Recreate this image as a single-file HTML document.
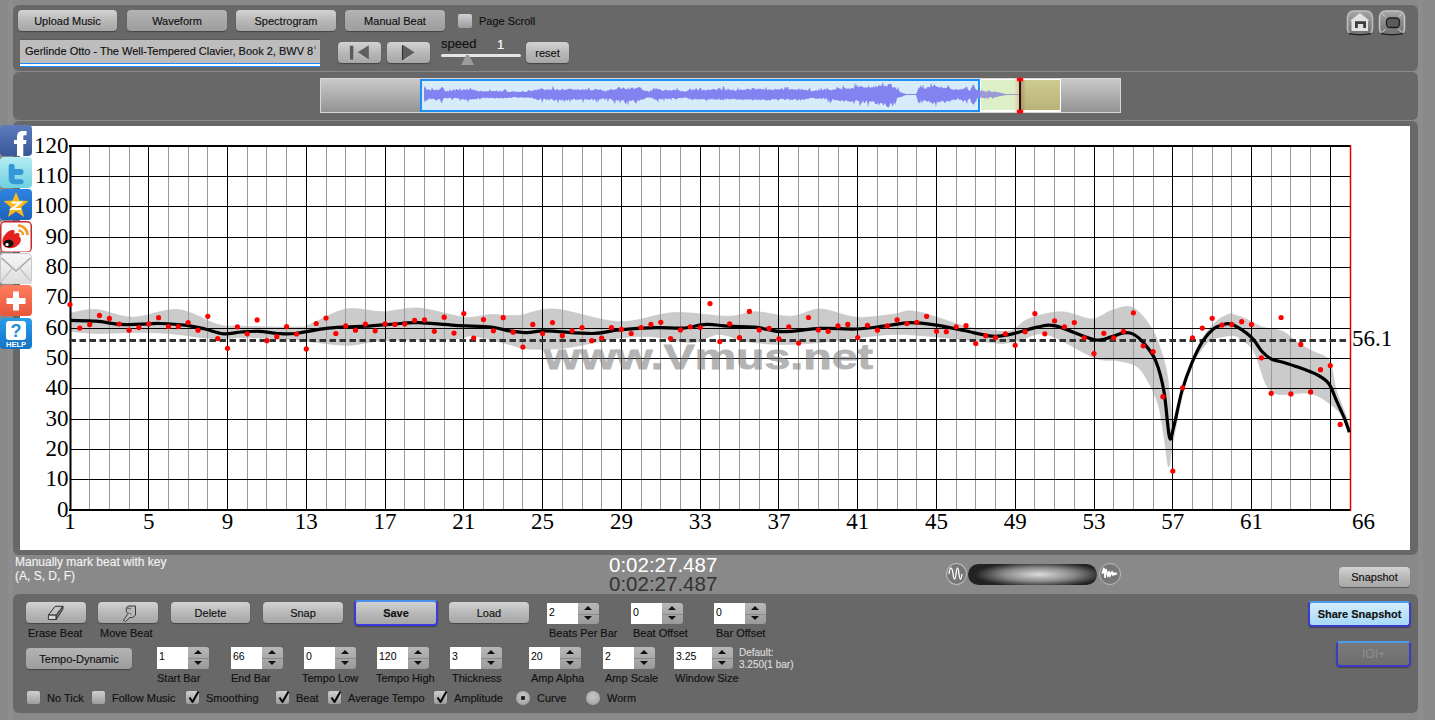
<!DOCTYPE html><html><head><meta charset="utf-8"><style>
*{margin:0;padding:0;box-sizing:border-box}
html,body{width:1435px;height:720px;overflow:hidden;background:#898989;font-family:"Liberation Sans",sans-serif;position:relative}
.panel{position:absolute;background:#686868;border-radius:6px}
.btn{-webkit-text-stroke:0.15px #111;position:absolute;border-radius:4px;background:linear-gradient(#d2d2d2,#b9b9b9 50%,#a6a6a6);box-shadow:0 1px 1px rgba(0,0,0,.35);font-size:11px;color:#111;text-align:center;display:flex;align-items:center;justify-content:center}
.btn.dark{background:linear-gradient(#b4b4b4,#a8a8a8 50%,#9d9d9d)}
.inp{position:absolute;background:#fff;font-size:10.5px;color:#000;padding-left:2px;padding-top:3px;line-height:13px}
.spin{position:absolute;background:linear-gradient(#b8b8b8,#9a9a9a);border-radius:0 3px 3px 0}
.spin i{position:absolute;left:50%;margin-left:-4.5px;width:0;height:0;border-left:4px solid transparent;border-right:4px solid transparent}
.spin i.up{top:3px;border-bottom:4px solid #111}
.spin i.dn{bottom:4px;border-top:4px solid #111}
.spin:after{content:"";position:absolute;left:0;right:0;top:50%;height:1px;background:#8a8a8a}
.lbl{-webkit-text-stroke:0.15px currentColor;position:absolute;font-size:11px;color:#111;white-space:nowrap;line-height:14px}
.chk{position:absolute;width:13px;height:13px;background:linear-gradient(#cfcfcf,#9c9c9c);border-radius:2px;font-size:17px;line-height:13px;text-align:center;color:#000;font-weight:bold}
.rad{position:absolute;width:14px;height:14px;border-radius:50%;background:radial-gradient(circle at 50% 40%,#c8c8c8,#9a9a9a)}
.soc{position:absolute;left:0;width:32px;height:31px;border-radius:4px;overflow:hidden}
</style></head><body>
<div style="position:absolute;left:8px;top:0;width:5px;height:720px;background:#8d8d8d"></div>
<div style="position:absolute;left:1418px;top:0;width:5px;height:720px;background:#8d8d8d"></div>
<div class="panel" style="left:13px;top:5px;width:1405px;height:66px"></div>
<div class="panel" style="left:13px;top:72px;width:1405px;height:48px"></div>
<div class="panel" style="left:13px;top:121px;width:1405px;height:434px"></div>
<div class="panel" style="left:13px;top:594px;width:1405px;height:119px"></div>
<div class="btn" style="left:18px;top:10px;width:99px;height:21px;">Upload Music</div>
<div class="btn dark" style="left:127px;top:10px;width:100px;height:21px;">Waveform</div>
<div class="btn" style="left:236px;top:10px;width:100px;height:21px;">Spectrogram</div>
<div class="btn dark" style="left:345px;top:10px;width:100px;height:21px;">Manual Beat</div>
<div class="chk" style="left:458px;top:14px;width:14px;height:14px"></div>
<div class="lbl" style="left:479px;top:14px">Page Scroll</div>
<div style="position:absolute;left:20px;top:39px;width:300px;height:28px;background:#bdbdbd;border-top:1px solid #5a5a5a"></div>
<div style="position:absolute;left:20px;top:63px;width:300px;height:4px;background:#fff;border-top:1px solid #1a8cff;border-bottom:1px solid #1a8cff"></div>
<div class="lbl" style="left:25px;top:44px;color:#111">Gerlinde Otto - The Well-Tempered Clavier, Book 2, BWV 8&#703;</div>
<div class="btn" style="left:338px;top:42px;width:43px;height:21px;"><svg width="30" height="20" viewBox="0 0 30 20"><rect x="4.5" y="2.3" width="4.3" height="14.8" fill="#5a5a5a" stroke="#ccc" stroke-width="0.6"/><path d="M12.5,9.5 L23.8,2.3 L23.8,17.1 Z" fill="#5e5e5e"/><path d="M12.5,9.5 L23.8,17.1" stroke="#d0d0d0" stroke-width="0.8"/></svg></div>
<div class="btn" style="left:387px;top:42px;width:43px;height:21px;"><svg width="30" height="20" viewBox="0 0 30 20"><rect x="7.9" y="2.3" width="1.8" height="14.8" fill="#333"/><path d="M9.7,2.3 L21,9.7 L9.7,17.1 Z" fill="#5e5e5e"/><path d="M9.7,17.1 L21,9.7" stroke="#d0d0d0" stroke-width="0.8"/></svg></div>
<div class="lbl" style="left:441px;top:37px;font-size:13px">speed</div>
<div class="lbl" style="left:497px;top:38px;font-size:13px;color:#fff">1</div>
<div style="position:absolute;left:441px;top:54px;width:80px;height:3px;background:#e6e6e6;border-radius:2px"></div>
<div style="position:absolute;left:461px;top:55px;width:13px;height:10px;background:#9c9c9c;clip-path:polygon(40% 0,60% 0,100% 100%,0 100%)"></div>
<div class="btn" style="left:526px;top:42px;width:43px;height:21px;">reset</div>
<svg style="position:absolute;left:1345px;top:8px" width="64" height="30" viewBox="0 0 64 30"><defs><linearGradient id="ig" x1="0" y1="0" x2="0" y2="1"><stop offset="0" stop-color="#a6a6a6"/><stop offset="1" stop-color="#6e6e6e"/></linearGradient></defs><rect x="2.5" y="3" width="25" height="23.5" rx="6" fill="url(#ig)" stroke="#bdbdbd" stroke-width="1.6"/><path d="M4,25.5 Q15,28 26,25.5" stroke="#1c1c1c" stroke-width="1.4" fill="none"/><path d="M15,5 L24.5,12.8 L23,12.8 L23,23 L6.5,23 L6.5,12.8 L5,12.8 Z" fill="#e2e2e2"/><path d="M10,13.3 H21 V20 H18.2 V16 H12.8 V20 H10 Z" fill="#3c3c3c"/><rect x="34.5" y="3" width="25" height="23.5" rx="6" fill="url(#ig)" stroke="#c2c2c2" stroke-width="1.6"/><path d="M36,25.5 Q47,28 58,25.5" stroke="#1c1c1c" stroke-width="1.4" fill="none"/><rect x="41.5" y="10" width="13" height="9.5" rx="3.5" fill="#5a5a5a" stroke="#1e1e1e" stroke-width="1.3"/><path d="M37.5,24 L40.5,21 M56.5,24 L53.5,21 M37.5,6 L40,8.5 M56.5,6 L54,8.5" stroke="#ddd" stroke-width="1"/></svg>
<div style="position:absolute;left:320px;top:78px;width:801px;height:35px;background:linear-gradient(#c9c9c9,#939393);border:1px solid #d8d8d8"></div>
<div style="position:absolute;left:420px;top:79px;width:560px;height:33px;background:#d7ecfb;border:2px solid #1f8ef5"></div>
<div style="position:absolute;left:980px;top:79px;width:81px;height:33px;background:#fff"></div>
<div style="position:absolute;left:981px;top:80px;width:39px;height:30px;background:#dcefc6"></div>
<div style="position:absolute;left:1020px;top:80px;width:40px;height:30px;background:linear-gradient(#cdcb92,#b9b276)"></div>
<div style="position:absolute;left:1021px;top:80px;width:5px;height:30px;background:linear-gradient(90deg,rgba(170,110,80,.5),rgba(170,110,80,0))"></div>
<svg style="position:absolute;left:0;top:0" width="1435" height="130"><defs><clipPath id="c1"><rect x="420" y="79" width="560" height="33"/></clipPath><clipPath id="c2"><rect x="980" y="79" width="40" height="33"/></clipPath></defs><path d="M424,88.2 L425,85.8 L426,88.7 L427,89.9 L428,89.5 L429,88.9 L430,90.4 L431,90.4 L432,87.3 L433,89.4 L434,89.9 L435,90.3 L436,89.3 L437,89.9 L438,90.6 L439,89.1 L440,89.6 L441,87.5 L442,87.0 L443,87.7 L444,88.9 L445,91.2 L446,91.7 L447,90.6 L448,91.2 L449,91.4 L450,88.8 L451,90.9 L452,90.7 L453,90.0 L454,88.8 L455,91.2 L456,88.7 L457,89.2 L458,90.0 L459,90.3 L460,87.8 L461,90.2 L462,90.7 L463,89.6 L464,88.9 L465,90.2 L466,89.8 L467,88.6 L468,89.9 L469,90.2 L470,88.1 L471,88.4 L472,90.1 L473,89.1 L474,90.7 L475,89.7 L476,90.6 L477,90.7 L478,91.3 L479,91.4 L480,91.3 L481,90.5 L482,91.2 L483,91.5 L484,91.4 L485,91.3 L486,91.2 L487,91.1 L488,91.8 L489,90.8 L490,89.3 L491,91.5 L492,91.0 L493,91.0 L494,91.2 L495,90.9 L496,91.0 L497,90.2 L498,91.7 L499,91.6 L500,90.6 L501,91.3 L502,91.6 L503,91.6 L504,89.5 L505,89.5 L506,89.2 L507,91.9 L508,91.5 L509,91.9 L510,92.0 L511,92.0 L512,90.8 L513,91.6 L514,91.9 L515,90.9 L516,91.9 L517,91.7 L518,92.0 L519,92.1 L520,91.5 L521,91.9 L522,91.8 L523,90.3 L524,92.0 L525,92.0 L526,91.7 L527,91.8 L528,90.6 L529,89.9 L530,91.2 L531,90.2 L532,91.4 L533,90.4 L534,90.0 L535,89.4 L536,90.8 L537,89.4 L538,89.6 L539,89.3 L540,89.8 L541,87.5 L542,89.0 L543,88.8 L544,89.3 L545,90.6 L546,89.3 L547,89.7 L548,89.4 L549,89.1 L550,90.4 L551,89.2 L552,89.5 L553,85.4 L554,88.7 L555,89.9 L556,90.0 L557,88.6 L558,89.8 L559,90.2 L560,89.9 L561,90.2 L562,88.2 L563,89.4 L564,89.5 L565,90.0 L566,89.7 L567,89.5 L568,89.0 L569,88.8 L570,88.7 L571,88.4 L572,89.7 L573,89.0 L574,90.0 L575,89.4 L576,89.5 L577,89.7 L578,89.3 L579,89.6 L580,90.3 L581,89.4 L582,89.9 L583,88.6 L584,90.4 L585,89.3 L586,88.9 L587,90.3 L588,88.7 L589,87.3 L590,90.1 L591,90.3 L592,90.4 L593,89.9 L594,90.1 L595,89.0 L596,88.8 L597,89.7 L598,89.4 L599,90.1 L600,89.2 L601,89.2 L602,90.8 L603,90.6 L604,90.6 L605,91.5 L606,91.5 L607,90.2 L608,90.8 L609,89.7 L610,90.3 L611,88.5 L612,89.4 L613,90.0 L614,89.7 L615,89.1 L616,89.9 L617,88.3 L618,87.7 L619,86.5 L620,87.7 L621,89.3 L622,88.5 L623,87.5 L624,87.7 L625,88.9 L626,89.2 L627,89.6 L628,87.5 L629,89.4 L630,89.1 L631,87.8 L632,87.6 L633,87.8 L634,89.3 L635,88.7 L636,87.7 L637,88.5 L638,87.1 L639,87.3 L640,87.5 L641,87.7 L642,89.7 L643,89.9 L644,90.7 L645,90.4 L646,91.2 L647,90.6 L648,91.2 L649,91.7 L650,91.4 L651,89.4 L652,91.1 L653,88.7 L654,87.7 L655,90.0 L656,87.4 L657,89.3 L658,89.0 L659,89.1 L660,89.3 L661,90.1 L662,90.5 L663,90.7 L664,90.8 L665,89.4 L666,89.8 L667,90.2 L668,91.0 L669,89.7 L670,90.2 L671,90.9 L672,90.0 L673,90.2 L674,89.5 L675,89.9 L676,90.4 L677,87.6 L678,90.0 L679,89.9 L680,90.9 L681,91.4 L682,90.7 L683,91.8 L684,91.1 L685,92.2 L686,91.0 L687,91.2 L688,90.2 L689,89.9 L690,87.9 L691,89.6 L692,90.5 L693,88.8 L694,90.3 L695,89.5 L696,88.1 L697,89.1 L698,90.7 L699,89.5 L700,88.1 L701,87.7 L702,90.7 L703,90.3 L704,89.2 L705,90.6 L706,90.7 L707,89.3 L708,90.3 L709,89.4 L710,89.7 L711,90.2 L712,89.1 L713,89.3 L714,89.1 L715,89.5 L716,89.8 L717,89.9 L718,88.2 L719,88.4 L720,87.9 L721,89.4 L722,90.6 L723,86.5 L724,86.2 L725,90.5 L726,89.5 L727,90.5 L728,87.9 L729,90.2 L730,88.9 L731,90.7 L732,90.1 L733,89.1 L734,90.7 L735,90.7 L736,90.4 L737,90.2 L738,86.8 L739,90.6 L740,89.5 L741,89.0 L742,90.3 L743,89.9 L744,89.6 L745,89.9 L746,89.3 L747,89.0 L748,88.7 L749,89.1 L750,89.9 L751,89.8 L752,88.0 L753,88.3 L754,87.7 L755,89.5 L756,88.8 L757,90.0 L758,88.3 L759,89.3 L760,88.5 L761,88.8 L762,90.0 L763,88.9 L764,88.9 L765,89.9 L766,86.6 L767,90.0 L768,90.1 L769,89.3 L770,89.5 L771,89.6 L772,89.7 L773,90.4 L774,89.7 L775,88.5 L776,89.7 L777,88.9 L778,90.1 L779,88.9 L780,89.5 L781,88.9 L782,87.4 L783,90.0 L784,89.8 L785,86.0 L786,88.9 L787,86.9 L788,86.9 L789,90.3 L790,89.0 L791,89.5 L792,89.1 L793,89.5 L794,89.4 L795,89.5 L796,89.4 L797,90.3 L798,88.9 L799,88.2 L800,90.1 L801,89.6 L802,88.6 L803,89.9 L804,89.7 L805,90.1 L806,89.5 L807,90.3 L808,90.7 L809,88.4 L810,88.1 L811,91.7 L812,90.9 L813,90.9 L814,90.7 L815,90.5 L816,90.4 L817,90.2 L818,90.9 L819,88.2 L820,91.2 L821,87.3 L822,90.1 L823,90.4 L824,88.9 L825,88.8 L826,90.6 L827,86.9 L828,89.4 L829,89.5 L830,90.1 L831,90.5 L832,89.9 L833,89.4 L834,89.4 L835,89.5 L836,89.4 L837,86.1 L838,88.5 L839,87.8 L840,89.0 L841,88.5 L842,89.8 L843,84.5 L844,87.8 L845,87.6 L846,88.7 L847,89.1 L848,88.0 L849,88.8 L850,89.2 L851,87.9 L852,88.1 L853,88.8 L854,88.2 L855,82.6 L856,87.1 L857,84.3 L858,86.7 L859,86.9 L860,86.7 L861,85.3 L862,87.3 L863,86.3 L864,88.5 L865,86.9 L866,87.4 L867,88.0 L868,86.0 L869,86.3 L870,88.4 L871,86.4 L872,88.0 L873,86.7 L874,86.0 L875,87.9 L876,85.1 L877,87.5 L878,86.2 L879,85.4 L880,85.0 L881,86.5 L882,84.4 L883,82.1 L884,87.1 L885,85.5 L886,85.9 L887,86.8 L888,84.5 L889,84.1 L890,84.0 L891,83.6 L892,86.3 L893,88.5 L894,87.1 L895,86.9 L896,88.6 L897,89.9 L898,86.5 L899,90.8 L900,91.8 L901,92.6 L902,92.8 L903,93.0 L904,93.6 L905,93.5 L906,93.9 L907,93.9 L908,93.9 L909,93.9 L910,93.9 L911,93.9 L912,93.9 L913,93.9 L914,93.9 L915,93.9 L916,93.9 L917,91.9 L918,89.1 L919,87.9 L920,86.9 L921,85.2 L922,88.4 L923,84.2 L924,88.4 L925,88.5 L926,89.0 L927,87.2 L928,87.0 L929,87.0 L930,87.8 L931,82.8 L932,86.1 L933,86.9 L934,83.8 L935,85.7 L936,86.2 L937,86.7 L938,87.1 L939,87.2 L940,87.9 L941,86.0 L942,87.3 L943,88.0 L944,88.6 L945,87.5 L946,87.7 L947,88.1 L948,84.7 L949,86.7 L950,88.3 L951,89.0 L952,89.5 L953,89.7 L954,89.8 L955,89.2 L956,89.3 L957,89.6 L958,89.8 L959,90.1 L960,89.1 L961,89.4 L962,89.2 L963,88.5 L964,88.9 L965,87.5 L966,87.6 L967,86.6 L968,89.7 L969,90.4 L970,90.9 L971,88.6 L972,86.8 L973,84.5 L974,85.3 L975,87.7 L976,89.7 L977,90.1 L978,90.3 L979,91.1 L980,90.9 L981,90.9 L982,89.8 L983,90.7 L984,91.2 L985,91.2 L986,91.8 L987,91.9 L988,89.7 L989,91.2 L990,90.6 L991,91.5 L992,92.2 L993,91.8 L994,91.3 L995,91.5 L996,92.0 L997,91.9 L998,92.3 L999,92.5 L1000,92.5 L1001,92.8 L1002,92.9 L1003,93.4 L1004,93.5 L1005,93.8 L1006,94.0 L1007,94.0 L1008,94.0 L1009,94.0 L1010,94.0 L1011,94.0 L1012,94.0 L1013,94.0 L1014,94.0 L1015,94.0 L1016,94.0 L1017,94.0 L1018,94.0 L1019,94.0 L1019,95.0 L1018,95.0 L1017,95.0 L1016,95.0 L1015,95.0 L1014,95.0 L1013,95.0 L1012,95.0 L1011,95.0 L1010,95.0 L1009,95.0 L1008,95.0 L1007,95.0 L1006,95.0 L1005,95.2 L1004,95.5 L1003,95.6 L1002,96.0 L1001,96.0 L1000,96.1 L999,96.3 L998,97.0 L997,96.6 L996,97.5 L995,97.0 L994,97.6 L993,98.9 L992,97.8 L991,97.2 L990,97.2 L989,97.3 L988,99.7 L987,97.2 L986,98.6 L985,98.4 L984,97.8 L983,97.9 L982,98.1 L981,97.3 L980,98.0 L979,97.9 L978,98.0 L977,98.6 L976,101.4 L975,102.1 L974,104.4 L973,104.5 L972,103.3 L971,101.9 L970,97.7 L969,99.4 L968,99.2 L967,103.9 L966,101.4 L965,100.1 L964,100.4 L963,102.5 L962,100.2 L961,99.6 L960,100.0 L959,99.8 L958,97.7 L957,99.3 L956,99.7 L955,100.3 L954,99.5 L953,99.6 L952,100.3 L951,99.8 L950,102.6 L949,100.6 L948,101.6 L947,100.7 L946,101.6 L945,103.5 L944,101.7 L943,101.3 L942,100.6 L941,101.7 L940,102.1 L939,101.6 L938,103.0 L937,101.1 L936,107.3 L935,102.7 L934,101.8 L933,104.7 L932,102.8 L931,102.4 L930,102.6 L929,100.8 L928,101.2 L927,102.1 L926,101.0 L925,99.8 L924,100.6 L923,101.0 L922,103.4 L921,99.6 L920,104.0 L919,101.9 L918,102.7 L917,98.1 L916,95.1 L915,95.1 L914,95.1 L913,95.1 L912,95.1 L911,95.1 L910,95.1 L909,95.1 L908,95.1 L907,95.1 L906,95.1 L905,95.5 L904,95.4 L903,96.3 L902,96.7 L901,96.9 L900,97.0 L899,97.4 L898,97.5 L897,98.3 L896,102.3 L895,105.0 L894,101.6 L893,106.5 L892,104.9 L891,102.8 L890,103.9 L889,107.5 L888,107.1 L887,107.1 L886,105.4 L885,102.8 L884,104.9 L883,104.9 L882,102.8 L881,103.0 L880,103.5 L879,105.6 L878,102.5 L877,104.3 L876,104.0 L875,104.0 L874,100.9 L873,101.3 L872,101.7 L871,101.5 L870,100.9 L869,102.5 L868,107.3 L867,100.4 L866,100.7 L865,103.0 L864,102.9 L863,100.3 L862,102.5 L861,103.6 L860,106.7 L859,101.1 L858,101.2 L857,99.9 L856,100.3 L855,100.8 L854,104.4 L853,101.5 L852,101.2 L851,101.9 L850,101.6 L849,101.4 L848,101.2 L847,101.3 L846,99.6 L845,101.3 L844,101.4 L843,101.3 L842,99.8 L841,101.2 L840,101.1 L839,100.8 L838,100.7 L837,99.5 L836,100.5 L835,100.1 L834,100.1 L833,98.7 L832,100.0 L831,102.4 L830,103.1 L829,99.7 L828,102.5 L827,98.5 L826,98.2 L825,99.8 L824,98.0 L823,98.1 L822,99.4 L821,98.5 L820,97.9 L819,99.2 L818,98.3 L817,98.7 L816,98.8 L815,99.1 L814,97.6 L813,98.1 L812,98.3 L811,97.6 L810,98.3 L809,98.8 L808,98.3 L807,99.5 L806,98.7 L805,99.2 L804,99.7 L803,100.1 L802,98.6 L801,100.7 L800,100.1 L799,98.9 L798,100.5 L797,100.4 L796,99.6 L795,98.7 L794,99.0 L793,99.9 L792,100.0 L791,99.8 L790,99.8 L789,99.8 L788,98.8 L787,98.4 L786,99.9 L785,100.0 L784,99.6 L783,98.9 L782,98.8 L781,99.0 L780,98.7 L779,100.1 L778,100.4 L777,99.8 L776,99.0 L775,99.6 L774,99.1 L773,99.4 L772,98.7 L771,100.2 L770,100.6 L769,100.0 L768,99.9 L767,100.3 L766,100.8 L765,100.1 L764,99.6 L763,99.3 L762,99.7 L761,99.8 L760,100.3 L759,99.3 L758,99.7 L757,100.0 L756,99.8 L755,98.8 L754,100.0 L753,100.3 L752,100.6 L751,99.0 L750,99.2 L749,100.2 L748,99.0 L747,99.6 L746,99.9 L745,99.1 L744,99.9 L743,100.1 L742,98.8 L741,100.5 L740,99.0 L739,99.8 L738,99.2 L737,100.1 L736,99.2 L735,99.2 L734,98.7 L733,98.5 L732,99.6 L731,99.1 L730,99.2 L729,99.6 L728,99.1 L727,98.5 L726,99.8 L725,98.3 L724,100.1 L723,100.0 L722,99.4 L721,99.5 L720,100.6 L719,98.3 L718,99.5 L717,99.6 L716,99.9 L715,99.6 L714,98.9 L713,100.1 L712,98.3 L711,99.5 L710,99.1 L709,99.9 L708,98.4 L707,101.5 L706,99.9 L705,100.0 L704,98.6 L703,99.4 L702,99.3 L701,98.7 L700,100.0 L699,99.1 L698,99.5 L697,99.8 L696,98.6 L695,99.2 L694,99.4 L693,99.0 L692,100.8 L691,99.1 L690,98.3 L689,99.7 L688,97.7 L687,98.4 L686,97.3 L685,97.7 L684,97.5 L683,97.8 L682,98.6 L681,97.8 L680,98.2 L679,98.0 L678,98.0 L677,99.3 L676,99.4 L675,99.2 L674,98.1 L673,98.0 L672,98.1 L671,100.8 L670,98.1 L669,99.3 L668,99.1 L667,99.2 L666,98.6 L665,98.3 L664,101.4 L663,98.6 L662,98.9 L661,99.7 L660,98.5 L659,98.9 L658,102.8 L657,100.0 L656,100.0 L655,99.2 L654,99.5 L653,97.9 L652,98.5 L651,97.2 L650,97.7 L649,97.6 L648,97.6 L647,97.6 L646,97.9 L645,98.4 L644,98.9 L643,99.8 L642,99.6 L641,99.3 L640,100.5 L639,100.8 L638,100.1 L637,101.4 L636,104.2 L635,101.8 L634,101.5 L633,99.8 L632,100.1 L631,101.4 L630,100.4 L629,100.6 L628,105.4 L627,100.7 L626,104.5 L625,103.1 L624,101.2 L623,99.7 L622,100.5 L621,100.3 L620,103.7 L619,99.7 L618,100.5 L617,101.1 L616,99.1 L615,103.9 L614,102.3 L613,99.9 L612,100.6 L611,98.8 L610,98.4 L609,98.8 L608,102.0 L607,99.2 L606,98.0 L605,100.5 L604,98.8 L603,97.9 L602,99.1 L601,98.6 L600,99.7 L599,99.1 L598,102.9 L597,99.6 L596,102.3 L595,99.3 L594,99.3 L593,101.0 L592,98.5 L591,98.9 L590,100.2 L589,99.5 L588,99.9 L587,98.8 L586,100.2 L585,98.5 L584,99.9 L583,103.1 L582,99.0 L581,99.8 L580,99.1 L579,99.6 L578,100.4 L577,98.8 L576,101.1 L575,99.1 L574,99.0 L573,99.3 L572,100.2 L571,98.9 L570,102.8 L569,98.8 L568,100.6 L567,100.7 L566,99.3 L565,100.5 L564,102.3 L563,99.6 L562,100.3 L561,100.4 L560,99.6 L559,99.8 L558,103.7 L557,99.8 L556,99.8 L555,100.6 L554,100.6 L553,100.5 L552,98.8 L551,99.1 L550,99.0 L549,101.3 L548,98.5 L547,99.7 L546,100.2 L545,98.8 L544,98.5 L543,100.1 L542,102.9 L541,98.5 L540,98.7 L539,100.3 L538,100.0 L537,99.7 L536,99.6 L535,98.2 L534,99.2 L533,98.5 L532,97.5 L531,97.7 L530,97.9 L529,97.6 L528,97.8 L527,97.6 L526,97.3 L525,98.0 L524,97.8 L523,97.2 L522,97.7 L521,97.3 L520,97.1 L519,98.6 L518,96.7 L517,98.2 L516,97.1 L515,97.0 L514,97.0 L513,97.2 L512,97.9 L511,98.0 L510,97.0 L509,98.1 L508,98.1 L507,98.0 L506,98.3 L505,97.7 L504,97.7 L503,99.1 L502,97.7 L501,97.8 L500,98.5 L499,98.2 L498,98.1 L497,97.8 L496,98.5 L495,98.4 L494,97.9 L493,97.9 L492,98.2 L491,97.6 L490,98.3 L489,98.0 L488,98.3 L487,97.2 L486,98.4 L485,97.8 L484,97.8 L483,97.6 L482,98.4 L481,98.1 L480,99.7 L479,98.5 L478,97.8 L477,99.2 L476,99.2 L475,98.8 L474,99.4 L473,99.3 L472,98.9 L471,99.4 L470,99.8 L469,99.3 L468,102.4 L467,100.3 L466,99.0 L465,100.0 L464,99.7 L463,98.4 L462,100.0 L461,98.7 L460,101.2 L459,98.2 L458,98.2 L457,98.5 L456,97.9 L455,97.8 L454,98.3 L453,98.8 L452,100.5 L451,98.3 L450,97.8 L449,97.7 L448,98.6 L447,98.5 L446,97.8 L445,97.9 L444,98.1 L443,99.5 L442,103.0 L441,102.5 L440,99.1 L439,98.9 L438,99.5 L437,99.7 L436,101.0 L435,99.4 L434,98.8 L433,99.1 L432,98.4 L431,99.4 L430,98.5 L429,98.4 L428,100.1 L427,99.8 L426,101.4 L425,99.9 L424,103.2Z" fill="#8282f0" clip-path="url(#c1)"/><path d="M424,88.2 L425,85.8 L426,88.7 L427,89.9 L428,89.5 L429,88.9 L430,90.4 L431,90.4 L432,87.3 L433,89.4 L434,89.9 L435,90.3 L436,89.3 L437,89.9 L438,90.6 L439,89.1 L440,89.6 L441,87.5 L442,87.0 L443,87.7 L444,88.9 L445,91.2 L446,91.7 L447,90.6 L448,91.2 L449,91.4 L450,88.8 L451,90.9 L452,90.7 L453,90.0 L454,88.8 L455,91.2 L456,88.7 L457,89.2 L458,90.0 L459,90.3 L460,87.8 L461,90.2 L462,90.7 L463,89.6 L464,88.9 L465,90.2 L466,89.8 L467,88.6 L468,89.9 L469,90.2 L470,88.1 L471,88.4 L472,90.1 L473,89.1 L474,90.7 L475,89.7 L476,90.6 L477,90.7 L478,91.3 L479,91.4 L480,91.3 L481,90.5 L482,91.2 L483,91.5 L484,91.4 L485,91.3 L486,91.2 L487,91.1 L488,91.8 L489,90.8 L490,89.3 L491,91.5 L492,91.0 L493,91.0 L494,91.2 L495,90.9 L496,91.0 L497,90.2 L498,91.7 L499,91.6 L500,90.6 L501,91.3 L502,91.6 L503,91.6 L504,89.5 L505,89.5 L506,89.2 L507,91.9 L508,91.5 L509,91.9 L510,92.0 L511,92.0 L512,90.8 L513,91.6 L514,91.9 L515,90.9 L516,91.9 L517,91.7 L518,92.0 L519,92.1 L520,91.5 L521,91.9 L522,91.8 L523,90.3 L524,92.0 L525,92.0 L526,91.7 L527,91.8 L528,90.6 L529,89.9 L530,91.2 L531,90.2 L532,91.4 L533,90.4 L534,90.0 L535,89.4 L536,90.8 L537,89.4 L538,89.6 L539,89.3 L540,89.8 L541,87.5 L542,89.0 L543,88.8 L544,89.3 L545,90.6 L546,89.3 L547,89.7 L548,89.4 L549,89.1 L550,90.4 L551,89.2 L552,89.5 L553,85.4 L554,88.7 L555,89.9 L556,90.0 L557,88.6 L558,89.8 L559,90.2 L560,89.9 L561,90.2 L562,88.2 L563,89.4 L564,89.5 L565,90.0 L566,89.7 L567,89.5 L568,89.0 L569,88.8 L570,88.7 L571,88.4 L572,89.7 L573,89.0 L574,90.0 L575,89.4 L576,89.5 L577,89.7 L578,89.3 L579,89.6 L580,90.3 L581,89.4 L582,89.9 L583,88.6 L584,90.4 L585,89.3 L586,88.9 L587,90.3 L588,88.7 L589,87.3 L590,90.1 L591,90.3 L592,90.4 L593,89.9 L594,90.1 L595,89.0 L596,88.8 L597,89.7 L598,89.4 L599,90.1 L600,89.2 L601,89.2 L602,90.8 L603,90.6 L604,90.6 L605,91.5 L606,91.5 L607,90.2 L608,90.8 L609,89.7 L610,90.3 L611,88.5 L612,89.4 L613,90.0 L614,89.7 L615,89.1 L616,89.9 L617,88.3 L618,87.7 L619,86.5 L620,87.7 L621,89.3 L622,88.5 L623,87.5 L624,87.7 L625,88.9 L626,89.2 L627,89.6 L628,87.5 L629,89.4 L630,89.1 L631,87.8 L632,87.6 L633,87.8 L634,89.3 L635,88.7 L636,87.7 L637,88.5 L638,87.1 L639,87.3 L640,87.5 L641,87.7 L642,89.7 L643,89.9 L644,90.7 L645,90.4 L646,91.2 L647,90.6 L648,91.2 L649,91.7 L650,91.4 L651,89.4 L652,91.1 L653,88.7 L654,87.7 L655,90.0 L656,87.4 L657,89.3 L658,89.0 L659,89.1 L660,89.3 L661,90.1 L662,90.5 L663,90.7 L664,90.8 L665,89.4 L666,89.8 L667,90.2 L668,91.0 L669,89.7 L670,90.2 L671,90.9 L672,90.0 L673,90.2 L674,89.5 L675,89.9 L676,90.4 L677,87.6 L678,90.0 L679,89.9 L680,90.9 L681,91.4 L682,90.7 L683,91.8 L684,91.1 L685,92.2 L686,91.0 L687,91.2 L688,90.2 L689,89.9 L690,87.9 L691,89.6 L692,90.5 L693,88.8 L694,90.3 L695,89.5 L696,88.1 L697,89.1 L698,90.7 L699,89.5 L700,88.1 L701,87.7 L702,90.7 L703,90.3 L704,89.2 L705,90.6 L706,90.7 L707,89.3 L708,90.3 L709,89.4 L710,89.7 L711,90.2 L712,89.1 L713,89.3 L714,89.1 L715,89.5 L716,89.8 L717,89.9 L718,88.2 L719,88.4 L720,87.9 L721,89.4 L722,90.6 L723,86.5 L724,86.2 L725,90.5 L726,89.5 L727,90.5 L728,87.9 L729,90.2 L730,88.9 L731,90.7 L732,90.1 L733,89.1 L734,90.7 L735,90.7 L736,90.4 L737,90.2 L738,86.8 L739,90.6 L740,89.5 L741,89.0 L742,90.3 L743,89.9 L744,89.6 L745,89.9 L746,89.3 L747,89.0 L748,88.7 L749,89.1 L750,89.9 L751,89.8 L752,88.0 L753,88.3 L754,87.7 L755,89.5 L756,88.8 L757,90.0 L758,88.3 L759,89.3 L760,88.5 L761,88.8 L762,90.0 L763,88.9 L764,88.9 L765,89.9 L766,86.6 L767,90.0 L768,90.1 L769,89.3 L770,89.5 L771,89.6 L772,89.7 L773,90.4 L774,89.7 L775,88.5 L776,89.7 L777,88.9 L778,90.1 L779,88.9 L780,89.5 L781,88.9 L782,87.4 L783,90.0 L784,89.8 L785,86.0 L786,88.9 L787,86.9 L788,86.9 L789,90.3 L790,89.0 L791,89.5 L792,89.1 L793,89.5 L794,89.4 L795,89.5 L796,89.4 L797,90.3 L798,88.9 L799,88.2 L800,90.1 L801,89.6 L802,88.6 L803,89.9 L804,89.7 L805,90.1 L806,89.5 L807,90.3 L808,90.7 L809,88.4 L810,88.1 L811,91.7 L812,90.9 L813,90.9 L814,90.7 L815,90.5 L816,90.4 L817,90.2 L818,90.9 L819,88.2 L820,91.2 L821,87.3 L822,90.1 L823,90.4 L824,88.9 L825,88.8 L826,90.6 L827,86.9 L828,89.4 L829,89.5 L830,90.1 L831,90.5 L832,89.9 L833,89.4 L834,89.4 L835,89.5 L836,89.4 L837,86.1 L838,88.5 L839,87.8 L840,89.0 L841,88.5 L842,89.8 L843,84.5 L844,87.8 L845,87.6 L846,88.7 L847,89.1 L848,88.0 L849,88.8 L850,89.2 L851,87.9 L852,88.1 L853,88.8 L854,88.2 L855,82.6 L856,87.1 L857,84.3 L858,86.7 L859,86.9 L860,86.7 L861,85.3 L862,87.3 L863,86.3 L864,88.5 L865,86.9 L866,87.4 L867,88.0 L868,86.0 L869,86.3 L870,88.4 L871,86.4 L872,88.0 L873,86.7 L874,86.0 L875,87.9 L876,85.1 L877,87.5 L878,86.2 L879,85.4 L880,85.0 L881,86.5 L882,84.4 L883,82.1 L884,87.1 L885,85.5 L886,85.9 L887,86.8 L888,84.5 L889,84.1 L890,84.0 L891,83.6 L892,86.3 L893,88.5 L894,87.1 L895,86.9 L896,88.6 L897,89.9 L898,86.5 L899,90.8 L900,91.8 L901,92.6 L902,92.8 L903,93.0 L904,93.6 L905,93.5 L906,93.9 L907,93.9 L908,93.9 L909,93.9 L910,93.9 L911,93.9 L912,93.9 L913,93.9 L914,93.9 L915,93.9 L916,93.9 L917,91.9 L918,89.1 L919,87.9 L920,86.9 L921,85.2 L922,88.4 L923,84.2 L924,88.4 L925,88.5 L926,89.0 L927,87.2 L928,87.0 L929,87.0 L930,87.8 L931,82.8 L932,86.1 L933,86.9 L934,83.8 L935,85.7 L936,86.2 L937,86.7 L938,87.1 L939,87.2 L940,87.9 L941,86.0 L942,87.3 L943,88.0 L944,88.6 L945,87.5 L946,87.7 L947,88.1 L948,84.7 L949,86.7 L950,88.3 L951,89.0 L952,89.5 L953,89.7 L954,89.8 L955,89.2 L956,89.3 L957,89.6 L958,89.8 L959,90.1 L960,89.1 L961,89.4 L962,89.2 L963,88.5 L964,88.9 L965,87.5 L966,87.6 L967,86.6 L968,89.7 L969,90.4 L970,90.9 L971,88.6 L972,86.8 L973,84.5 L974,85.3 L975,87.7 L976,89.7 L977,90.1 L978,90.3 L979,91.1 L980,90.9 L981,90.9 L982,89.8 L983,90.7 L984,91.2 L985,91.2 L986,91.8 L987,91.9 L988,89.7 L989,91.2 L990,90.6 L991,91.5 L992,92.2 L993,91.8 L994,91.3 L995,91.5 L996,92.0 L997,91.9 L998,92.3 L999,92.5 L1000,92.5 L1001,92.8 L1002,92.9 L1003,93.4 L1004,93.5 L1005,93.8 L1006,94.0 L1007,94.0 L1008,94.0 L1009,94.0 L1010,94.0 L1011,94.0 L1012,94.0 L1013,94.0 L1014,94.0 L1015,94.0 L1016,94.0 L1017,94.0 L1018,94.0 L1019,94.0 L1019,95.0 L1018,95.0 L1017,95.0 L1016,95.0 L1015,95.0 L1014,95.0 L1013,95.0 L1012,95.0 L1011,95.0 L1010,95.0 L1009,95.0 L1008,95.0 L1007,95.0 L1006,95.0 L1005,95.2 L1004,95.5 L1003,95.6 L1002,96.0 L1001,96.0 L1000,96.1 L999,96.3 L998,97.0 L997,96.6 L996,97.5 L995,97.0 L994,97.6 L993,98.9 L992,97.8 L991,97.2 L990,97.2 L989,97.3 L988,99.7 L987,97.2 L986,98.6 L985,98.4 L984,97.8 L983,97.9 L982,98.1 L981,97.3 L980,98.0 L979,97.9 L978,98.0 L977,98.6 L976,101.4 L975,102.1 L974,104.4 L973,104.5 L972,103.3 L971,101.9 L970,97.7 L969,99.4 L968,99.2 L967,103.9 L966,101.4 L965,100.1 L964,100.4 L963,102.5 L962,100.2 L961,99.6 L960,100.0 L959,99.8 L958,97.7 L957,99.3 L956,99.7 L955,100.3 L954,99.5 L953,99.6 L952,100.3 L951,99.8 L950,102.6 L949,100.6 L948,101.6 L947,100.7 L946,101.6 L945,103.5 L944,101.7 L943,101.3 L942,100.6 L941,101.7 L940,102.1 L939,101.6 L938,103.0 L937,101.1 L936,107.3 L935,102.7 L934,101.8 L933,104.7 L932,102.8 L931,102.4 L930,102.6 L929,100.8 L928,101.2 L927,102.1 L926,101.0 L925,99.8 L924,100.6 L923,101.0 L922,103.4 L921,99.6 L920,104.0 L919,101.9 L918,102.7 L917,98.1 L916,95.1 L915,95.1 L914,95.1 L913,95.1 L912,95.1 L911,95.1 L910,95.1 L909,95.1 L908,95.1 L907,95.1 L906,95.1 L905,95.5 L904,95.4 L903,96.3 L902,96.7 L901,96.9 L900,97.0 L899,97.4 L898,97.5 L897,98.3 L896,102.3 L895,105.0 L894,101.6 L893,106.5 L892,104.9 L891,102.8 L890,103.9 L889,107.5 L888,107.1 L887,107.1 L886,105.4 L885,102.8 L884,104.9 L883,104.9 L882,102.8 L881,103.0 L880,103.5 L879,105.6 L878,102.5 L877,104.3 L876,104.0 L875,104.0 L874,100.9 L873,101.3 L872,101.7 L871,101.5 L870,100.9 L869,102.5 L868,107.3 L867,100.4 L866,100.7 L865,103.0 L864,102.9 L863,100.3 L862,102.5 L861,103.6 L860,106.7 L859,101.1 L858,101.2 L857,99.9 L856,100.3 L855,100.8 L854,104.4 L853,101.5 L852,101.2 L851,101.9 L850,101.6 L849,101.4 L848,101.2 L847,101.3 L846,99.6 L845,101.3 L844,101.4 L843,101.3 L842,99.8 L841,101.2 L840,101.1 L839,100.8 L838,100.7 L837,99.5 L836,100.5 L835,100.1 L834,100.1 L833,98.7 L832,100.0 L831,102.4 L830,103.1 L829,99.7 L828,102.5 L827,98.5 L826,98.2 L825,99.8 L824,98.0 L823,98.1 L822,99.4 L821,98.5 L820,97.9 L819,99.2 L818,98.3 L817,98.7 L816,98.8 L815,99.1 L814,97.6 L813,98.1 L812,98.3 L811,97.6 L810,98.3 L809,98.8 L808,98.3 L807,99.5 L806,98.7 L805,99.2 L804,99.7 L803,100.1 L802,98.6 L801,100.7 L800,100.1 L799,98.9 L798,100.5 L797,100.4 L796,99.6 L795,98.7 L794,99.0 L793,99.9 L792,100.0 L791,99.8 L790,99.8 L789,99.8 L788,98.8 L787,98.4 L786,99.9 L785,100.0 L784,99.6 L783,98.9 L782,98.8 L781,99.0 L780,98.7 L779,100.1 L778,100.4 L777,99.8 L776,99.0 L775,99.6 L774,99.1 L773,99.4 L772,98.7 L771,100.2 L770,100.6 L769,100.0 L768,99.9 L767,100.3 L766,100.8 L765,100.1 L764,99.6 L763,99.3 L762,99.7 L761,99.8 L760,100.3 L759,99.3 L758,99.7 L757,100.0 L756,99.8 L755,98.8 L754,100.0 L753,100.3 L752,100.6 L751,99.0 L750,99.2 L749,100.2 L748,99.0 L747,99.6 L746,99.9 L745,99.1 L744,99.9 L743,100.1 L742,98.8 L741,100.5 L740,99.0 L739,99.8 L738,99.2 L737,100.1 L736,99.2 L735,99.2 L734,98.7 L733,98.5 L732,99.6 L731,99.1 L730,99.2 L729,99.6 L728,99.1 L727,98.5 L726,99.8 L725,98.3 L724,100.1 L723,100.0 L722,99.4 L721,99.5 L720,100.6 L719,98.3 L718,99.5 L717,99.6 L716,99.9 L715,99.6 L714,98.9 L713,100.1 L712,98.3 L711,99.5 L710,99.1 L709,99.9 L708,98.4 L707,101.5 L706,99.9 L705,100.0 L704,98.6 L703,99.4 L702,99.3 L701,98.7 L700,100.0 L699,99.1 L698,99.5 L697,99.8 L696,98.6 L695,99.2 L694,99.4 L693,99.0 L692,100.8 L691,99.1 L690,98.3 L689,99.7 L688,97.7 L687,98.4 L686,97.3 L685,97.7 L684,97.5 L683,97.8 L682,98.6 L681,97.8 L680,98.2 L679,98.0 L678,98.0 L677,99.3 L676,99.4 L675,99.2 L674,98.1 L673,98.0 L672,98.1 L671,100.8 L670,98.1 L669,99.3 L668,99.1 L667,99.2 L666,98.6 L665,98.3 L664,101.4 L663,98.6 L662,98.9 L661,99.7 L660,98.5 L659,98.9 L658,102.8 L657,100.0 L656,100.0 L655,99.2 L654,99.5 L653,97.9 L652,98.5 L651,97.2 L650,97.7 L649,97.6 L648,97.6 L647,97.6 L646,97.9 L645,98.4 L644,98.9 L643,99.8 L642,99.6 L641,99.3 L640,100.5 L639,100.8 L638,100.1 L637,101.4 L636,104.2 L635,101.8 L634,101.5 L633,99.8 L632,100.1 L631,101.4 L630,100.4 L629,100.6 L628,105.4 L627,100.7 L626,104.5 L625,103.1 L624,101.2 L623,99.7 L622,100.5 L621,100.3 L620,103.7 L619,99.7 L618,100.5 L617,101.1 L616,99.1 L615,103.9 L614,102.3 L613,99.9 L612,100.6 L611,98.8 L610,98.4 L609,98.8 L608,102.0 L607,99.2 L606,98.0 L605,100.5 L604,98.8 L603,97.9 L602,99.1 L601,98.6 L600,99.7 L599,99.1 L598,102.9 L597,99.6 L596,102.3 L595,99.3 L594,99.3 L593,101.0 L592,98.5 L591,98.9 L590,100.2 L589,99.5 L588,99.9 L587,98.8 L586,100.2 L585,98.5 L584,99.9 L583,103.1 L582,99.0 L581,99.8 L580,99.1 L579,99.6 L578,100.4 L577,98.8 L576,101.1 L575,99.1 L574,99.0 L573,99.3 L572,100.2 L571,98.9 L570,102.8 L569,98.8 L568,100.6 L567,100.7 L566,99.3 L565,100.5 L564,102.3 L563,99.6 L562,100.3 L561,100.4 L560,99.6 L559,99.8 L558,103.7 L557,99.8 L556,99.8 L555,100.6 L554,100.6 L553,100.5 L552,98.8 L551,99.1 L550,99.0 L549,101.3 L548,98.5 L547,99.7 L546,100.2 L545,98.8 L544,98.5 L543,100.1 L542,102.9 L541,98.5 L540,98.7 L539,100.3 L538,100.0 L537,99.7 L536,99.6 L535,98.2 L534,99.2 L533,98.5 L532,97.5 L531,97.7 L530,97.9 L529,97.6 L528,97.8 L527,97.6 L526,97.3 L525,98.0 L524,97.8 L523,97.2 L522,97.7 L521,97.3 L520,97.1 L519,98.6 L518,96.7 L517,98.2 L516,97.1 L515,97.0 L514,97.0 L513,97.2 L512,97.9 L511,98.0 L510,97.0 L509,98.1 L508,98.1 L507,98.0 L506,98.3 L505,97.7 L504,97.7 L503,99.1 L502,97.7 L501,97.8 L500,98.5 L499,98.2 L498,98.1 L497,97.8 L496,98.5 L495,98.4 L494,97.9 L493,97.9 L492,98.2 L491,97.6 L490,98.3 L489,98.0 L488,98.3 L487,97.2 L486,98.4 L485,97.8 L484,97.8 L483,97.6 L482,98.4 L481,98.1 L480,99.7 L479,98.5 L478,97.8 L477,99.2 L476,99.2 L475,98.8 L474,99.4 L473,99.3 L472,98.9 L471,99.4 L470,99.8 L469,99.3 L468,102.4 L467,100.3 L466,99.0 L465,100.0 L464,99.7 L463,98.4 L462,100.0 L461,98.7 L460,101.2 L459,98.2 L458,98.2 L457,98.5 L456,97.9 L455,97.8 L454,98.3 L453,98.8 L452,100.5 L451,98.3 L450,97.8 L449,97.7 L448,98.6 L447,98.5 L446,97.8 L445,97.9 L444,98.1 L443,99.5 L442,103.0 L441,102.5 L440,99.1 L439,98.9 L438,99.5 L437,99.7 L436,101.0 L435,99.4 L434,98.8 L433,99.1 L432,98.4 L431,99.4 L430,98.5 L429,98.4 L428,100.1 L427,99.8 L426,101.4 L425,99.9 L424,103.2Z" fill="#9c9ad6" clip-path="url(#c2)"/></svg>
<div style="position:absolute;left:1014px;top:79px;width:5px;height:32px;background:linear-gradient(90deg,rgba(255,120,100,0),rgba(255,120,100,.35))"></div>
<div style="position:absolute;left:1019px;top:79px;width:2px;height:33px;background:#1a1a1a"></div>
<div style="position:absolute;left:1017px;top:78px;width:6px;height:3px;border-radius:1px;background:#f00;box-shadow:0 0 2px #f00"></div>
<div style="position:absolute;left:1017px;top:110px;width:6px;height:3px;border-radius:1px;background:#f00;box-shadow:0 0 2px #f00"></div>
<svg width="1390" height="424" viewBox="20 126 1390 424" style="position:absolute;left:20px;top:126px">
<rect x="20" y="126" width="1390" height="424" fill="#fff"/>
<path d="M70.0,313.2 C74.3,312.6 85.8,308.9 96.2,309.6 C106.7,310.2 118.9,317.2 132.5,317.2 C146.1,317.2 163.6,308.4 177.8,309.6 C192.0,310.8 207.1,321.6 217.6,324.4 C228.2,327.2 228.2,325.8 241.2,326.2 C254.2,326.7 284.1,327.4 295.5,327.1 C307.0,326.8 301.6,327.4 310.0,324.4 C318.4,321.4 334.2,311.1 346.2,309.0 C358.3,306.9 370.4,311.9 382.5,311.7 C394.6,311.6 405.1,307.2 418.7,308.1 C432.3,309.0 451.9,316.1 464.0,317.2 C476.1,318.2 482.1,314.8 491.2,314.5 C500.3,314.2 507.8,316.3 518.4,315.4 C528.9,314.5 537.8,308.0 554.6,309.0 C571.4,310.1 599.5,321.1 619.4,321.7 C639.2,322.3 655.6,313.6 673.7,312.6 C691.8,311.7 714.5,316.4 728.1,316.3 C741.7,316.1 744.7,311.7 755.3,311.7 C765.8,311.7 780.7,316.7 791.5,316.3 C802.3,315.8 809.2,308.9 820.0,309.0 C830.8,309.2 844.2,316.3 856.2,317.2 C868.3,318.1 882.5,315.4 892.5,314.5 C902.4,313.5 904.0,309.4 916.0,311.4 C928.1,313.3 953.8,323.3 965.0,326.2 C976.1,329.2 975.5,328.2 983.1,329.0 C990.6,329.7 1002.7,332.4 1010.3,330.8 C1017.8,329.1 1019.9,322.2 1028.4,319.0 C1036.8,315.8 1050.4,311.8 1061.0,311.7 C1071.5,311.7 1083.3,319.1 1091.7,318.9 C1100.0,318.7 1105.1,312.6 1111.1,310.6 C1117.1,308.5 1123.1,306.2 1127.8,306.4 C1132.4,306.6 1135.2,308.7 1138.9,311.9 C1142.6,315.2 1146.8,320.7 1150.0,325.8 C1153.2,330.9 1155.6,334.9 1158.3,342.5 C1161.1,350.1 1164.6,361.2 1166.7,371.7 C1168.8,382.1 1169.7,395.7 1170.8,405.0 C1172.0,414.3 1171.8,429.5 1173.6,427.2 C1175.5,424.9 1178.9,401.8 1181.9,391.1 C1185.0,380.5 1188.7,371.4 1191.7,363.3 C1194.7,355.2 1197.2,348.1 1200.0,342.5 C1202.8,336.9 1205.1,333.9 1208.3,330.0 C1211.6,326.1 1215.5,321.7 1219.4,318.9 C1223.3,316.1 1229.6,314.0 1231.7,313.2 C1233.8,312.4 1229.7,313.0 1231.9,313.9 C1234.2,314.8 1240.2,316.3 1245.3,318.5 C1250.4,320.7 1256.6,325.1 1262.8,327.2 C1269.0,329.3 1276.5,328.5 1282.3,331.1 C1288.1,333.7 1292.6,339.4 1297.8,342.8 C1303.0,346.2 1308.9,349.3 1313.4,351.6 C1317.9,353.9 1322.1,354.3 1325.0,356.4 C1327.9,358.5 1329.0,358.4 1330.9,364.2 C1332.9,370.0 1334.1,382.6 1336.7,391.4 C1339.3,400.1 1344.3,409.9 1346.5,416.7 C1348.7,423.5 1349.4,429.4 1350.0,432.0 L1350.0,432.0 C1349.1,429.8 1348.0,423.5 1344.5,418.7 C1341.0,413.9 1334.7,407.3 1328.9,403.1 C1323.1,398.9 1317.9,394.8 1309.5,393.4 C1301.1,391.9 1285.5,395.7 1278.4,394.4 C1271.3,393.1 1270.0,390.6 1266.7,385.6 C1263.5,380.6 1261.2,370.2 1258.9,364.2 C1256.6,358.2 1255.7,353.5 1252.8,349.4 C1249.9,345.4 1244.9,342.0 1241.7,339.7 C1238.4,337.4 1236.6,336.0 1233.3,335.6 C1230.1,335.1 1225.9,336.2 1222.2,336.9 C1218.5,337.6 1214.4,337.9 1211.1,339.7 C1207.9,341.6 1206.0,343.7 1202.8,348.1 C1199.5,352.5 1195.1,358.0 1191.7,366.1 C1188.2,374.2 1185.2,383.2 1181.9,396.7 C1178.7,410.1 1174.4,435.0 1172.2,446.7 C1170.0,458.3 1170.0,468.5 1168.6,466.7 C1167.2,464.8 1165.6,445.8 1163.9,435.6 C1162.2,425.3 1161.1,414.3 1158.3,405.0 C1155.6,395.7 1150.9,386.5 1147.2,380.0 C1143.5,373.5 1141.2,369.4 1136.1,366.1 C1131.0,362.9 1123.6,361.9 1116.7,360.6 C1109.7,359.2 1106.1,362.1 1094.4,357.8 C1082.7,353.4 1059.0,337.2 1046.5,334.4 C1034.0,331.6 1026.9,339.2 1019.3,340.7 C1011.8,342.2 1007.2,343.3 1001.2,343.5 C995.2,343.6 995.2,342.8 983.1,341.6 C971.0,340.4 943.8,337.4 928.7,336.2 C913.6,335.0 904.6,334.1 892.5,334.4 C880.4,334.7 868.3,336.7 856.2,338.0 C844.2,339.4 832.3,341.5 820.0,342.5 C807.7,343.6 794.7,344.5 782.4,344.4 C770.1,344.2 756.8,343.3 746.2,341.6 C735.6,340.0 728.1,334.2 719.0,334.4 C710.0,334.5 702.4,342.1 691.8,342.5 C681.3,343.0 667.7,337.9 655.6,337.1 C643.5,336.4 634.5,336.2 619.4,338.0 C604.3,339.8 580.3,346.2 565.0,348.0 C549.7,349.8 536.7,349.5 527.4,348.9 C518.1,348.3 518.4,346.5 509.3,344.4 C500.3,342.2 482.1,337.1 473.1,336.2 C464.0,335.3 470.1,338.2 455.0,338.9 C439.9,339.7 400.6,339.7 382.5,340.7 C364.4,341.8 360.7,345.4 346.2,345.3 C331.8,345.1 307.0,340.9 295.5,339.8 C284.1,338.8 286.5,339.3 277.4,338.9 C268.4,338.5 250.3,337.5 241.2,337.5 C232.1,337.5 229.1,338.8 223.1,338.9 C217.0,339.0 214.0,338.9 205.0,338.0 C195.9,337.1 180.8,334.4 168.7,333.5 C156.6,332.6 144.6,332.6 132.5,332.6 C120.4,332.6 106.7,333.7 96.2,333.5 C85.8,333.3 74.3,331.7 70.0,331.3 Z" fill="#cbcbcb" stroke="#c2c2c2" stroke-width="0.6"/>
<path d="M89.5,146V510M109.5,146V510M129.5,146V510M168.5,146V510M188.5,146V510M207.5,146V510M247.5,146V510M266.5,146V510M286.5,146V510M326.5,146V510M345.5,146V510M365.5,146V510M404.5,146V510M424.5,146V510M444.5,146V510M483.5,146V510M503.5,146V510M522.5,146V510M562.5,146V510M582.5,146V510M601.5,146V510M641.5,146V510M660.5,146V510M680.5,146V510M719.5,146V510M739.5,146V510M759.5,146V510M798.5,146V510M818.5,146V510M838.5,146V510M877.5,146V510M897.5,146V510M916.5,146V510M956.5,146V510M975.5,146V510M995.5,146V510M1034.5,146V510M1054.5,146V510M1074.5,146V510M1113.5,146V510M1133.5,146V510M1153.5,146V510M1192.5,146V510M1212.5,146V510M1231.5,146V510M1271.5,146V510M1290.5,146V510M1310.5,146V510" stroke="#9a9a9a" stroke-width="1" fill="none"/>
<path d="M148.5,146V510M227.5,146V510M306.5,146V510M385.5,146V510M463.5,146V510M542.5,146V510M621.5,146V510M700.5,146V510M778.5,146V510M857.5,146V510M936.5,146V510M1015.5,146V510M1094.5,146V510M1172.5,146V510M1251.5,146V510M1330.5,146V510M70,479.5H1350M70,449.5H1350M70,419.5H1350M70,388.5H1350M70,358.5H1350M70,328.5H1350M70,297.5H1350M70,267.5H1350M70,237.5H1350M70,206.5H1350M70,176.5H1350" stroke="#000" stroke-width="1" fill="none"/>
<path d="M70.5,145V511 M69,510H1350 M69,146H1350" stroke="#000" stroke-width="2" fill="none"/>
<path d="M1350.5,145V511" stroke="#e00000" stroke-width="1.5" fill="none"/>
<g opacity="0.55"><text x="544" y="369" font-family="Liberation Sans" font-weight="bold" font-size="35.5" textLength="329" lengthAdjust="spacingAndGlyphs" fill="#777" stroke="#777" stroke-width="0.8">www.Vmus.net</text></g>
<path d="M69.5,340.4H1347" stroke="#333" stroke-width="3" stroke-dasharray="6.5 3.5" fill="none"/>
<path d="M70.0,320.4 C74.3,320.6 87.9,320.5 96.2,321.2 C104.5,321.8 112.2,323.9 119.8,324.4 C127.3,324.9 134.9,324.2 141.5,324.1 C148.2,323.9 152.1,323.3 159.7,323.5 C167.2,323.7 179.3,324.4 186.8,325.3 C194.4,326.2 198.9,327.5 205.0,329.0 C211.0,330.4 217.0,333.3 223.1,333.8 C229.1,334.4 235.2,332.5 241.2,332.0 C247.2,331.6 253.3,331.1 259.3,331.3 C265.4,331.6 271.4,333.1 277.4,333.5 C283.5,333.8 287.1,334.4 295.5,333.5 C304.0,332.6 316.7,329.3 328.1,328.1 C339.6,326.8 352.3,327.0 364.4,326.2 C376.4,325.5 391.5,324.1 400.6,323.5 C409.7,322.9 409.7,322.3 418.7,322.6 C427.8,322.9 442.9,324.6 455.0,325.3 C467.0,326.1 482.1,326.2 491.2,327.1 C500.3,328.1 503.3,329.9 509.3,330.8 C515.4,331.7 521.4,332.6 527.4,332.6 C533.5,332.6 534.8,330.6 545.5,330.8 C556.3,330.9 579.9,333.6 592.2,333.5 C604.5,333.3 608.8,330.8 619.4,329.9 C629.9,328.9 645.0,328.0 655.6,327.7 C666.2,327.4 674.3,328.6 682.8,328.1 C691.2,327.5 698.8,324.7 706.3,324.4 C713.9,324.1 719.9,325.8 728.1,326.2 C736.2,326.7 746.2,326.2 755.3,327.1 C764.3,328.1 771.6,331.5 782.4,331.7 C793.2,331.9 807.7,328.9 820.0,328.4 C832.3,328.0 845.7,329.3 856.2,329.0 C866.8,328.6 874.4,327.3 883.4,326.2 C892.5,325.2 901.5,322.8 910.6,322.6 C919.7,322.5 928.7,324.0 937.8,325.3 C946.8,326.7 955.9,329.0 965.0,330.8 C974.0,332.6 984.6,335.6 992.1,336.2 C999.7,336.8 1002.7,335.9 1010.3,334.4 C1017.8,332.9 1029.9,328.6 1037.4,327.1 C1045.0,325.7 1046.0,323.8 1055.5,325.9 C1065.1,328.0 1085.2,337.9 1094.4,339.7 C1103.7,341.6 1106.2,338.1 1111.1,336.9 C1116.0,335.8 1119.9,333.2 1123.6,332.8 C1127.3,332.3 1129.9,332.3 1133.3,334.2 C1136.8,336.0 1140.7,339.5 1144.4,343.9 C1148.1,348.3 1152.3,352.7 1155.6,360.6 C1158.8,368.4 1161.6,378.4 1163.9,391.1 C1166.2,403.8 1167.8,430.9 1169.4,436.9 C1171.1,443.0 1171.5,434.9 1173.6,427.2 C1175.7,419.6 1178.9,401.8 1181.9,391.1 C1185.0,380.5 1188.2,371.7 1191.7,363.3 C1195.1,355.0 1199.1,346.9 1202.8,341.1 C1206.5,335.3 1210.6,331.3 1213.9,328.6 C1217.1,325.9 1219.3,325.7 1222.2,325.0 C1225.2,324.3 1226.9,322.3 1231.7,324.3 C1236.5,326.3 1246.0,332.5 1251.1,337.0 C1256.1,341.5 1258.7,347.9 1262.0,351.5 C1265.3,355.1 1267.7,357.1 1271.0,358.8 C1274.3,360.6 1277.5,360.6 1282.0,362.0 C1286.5,363.4 1291.9,365.0 1297.8,367.1 C1303.7,369.2 1312.1,372.1 1317.3,374.9 C1322.5,377.7 1325.7,379.3 1328.9,383.7 C1332.1,388.1 1334.1,395.4 1336.7,401.2 C1339.3,407.0 1342.4,413.5 1344.5,418.7 C1346.6,423.9 1348.6,430.0 1349.4,432.3" stroke="#000" stroke-width="3.2" fill="none" stroke-linejoin="round"/>
<g fill="#ff0000"><circle cx="70.0" cy="304.5" r="2.6"/><circle cx="79.8" cy="328.1" r="2.6"/><circle cx="89.7" cy="324.4" r="2.6"/><circle cx="99.5" cy="315.4" r="2.6"/><circle cx="109.4" cy="318.4" r="2.6"/><circle cx="119.2" cy="324.1" r="2.6"/><circle cx="129.1" cy="330.2" r="2.6"/><circle cx="138.9" cy="327.5" r="2.6"/><circle cx="148.8" cy="323.9" r="2.6"/><circle cx="158.6" cy="317.7" r="2.6"/><circle cx="168.5" cy="326.6" r="2.6"/><circle cx="178.3" cy="326.6" r="2.6"/><circle cx="188.2" cy="322.6" r="2.6"/><circle cx="198.0" cy="330.2" r="2.6"/><circle cx="207.8" cy="316.3" r="2.6"/><circle cx="217.7" cy="338.6" r="2.6"/><circle cx="227.5" cy="348.3" r="2.6"/><circle cx="237.4" cy="326.8" r="2.6"/><circle cx="247.2" cy="333.8" r="2.6"/><circle cx="257.1" cy="319.9" r="2.6"/><circle cx="266.9" cy="340.7" r="2.6"/><circle cx="276.8" cy="336.7" r="2.6"/><circle cx="286.6" cy="326.6" r="2.6"/><circle cx="296.5" cy="334.0" r="2.6"/><circle cx="306.3" cy="348.9" r="2.6"/><circle cx="316.2" cy="323.5" r="2.6"/><circle cx="326.0" cy="318.1" r="2.6"/><circle cx="335.8" cy="333.5" r="2.6"/><circle cx="345.7" cy="325.9" r="2.6"/><circle cx="355.5" cy="330.2" r="2.6"/><circle cx="365.4" cy="324.1" r="2.6"/><circle cx="375.2" cy="330.8" r="2.6"/><circle cx="385.1" cy="323.9" r="2.6"/><circle cx="394.9" cy="324.4" r="2.6"/><circle cx="404.8" cy="324.1" r="2.6"/><circle cx="414.6" cy="320.4" r="2.6"/><circle cx="424.5" cy="319.9" r="2.6"/><circle cx="434.3" cy="331.3" r="2.6"/><circle cx="444.2" cy="317.2" r="2.6"/><circle cx="454.0" cy="333.1" r="2.6"/><circle cx="463.8" cy="313.6" r="2.6"/><circle cx="473.7" cy="338.0" r="2.6"/><circle cx="483.5" cy="319.5" r="2.6"/><circle cx="493.4" cy="330.8" r="2.6"/><circle cx="503.2" cy="317.7" r="2.6"/><circle cx="513.1" cy="332.2" r="2.6"/><circle cx="522.9" cy="347.1" r="2.6"/><circle cx="532.8" cy="324.4" r="2.6"/><circle cx="542.6" cy="333.5" r="2.6"/><circle cx="552.5" cy="322.6" r="2.6"/><circle cx="562.3" cy="335.7" r="2.6"/><circle cx="572.2" cy="330.8" r="2.6"/><circle cx="582.0" cy="327.5" r="2.6"/><circle cx="591.8" cy="340.7" r="2.6"/><circle cx="601.7" cy="338.0" r="2.6"/><circle cx="611.5" cy="327.7" r="2.6"/><circle cx="621.4" cy="329.3" r="2.6"/><circle cx="631.2" cy="333.5" r="2.6"/><circle cx="641.1" cy="327.5" r="2.6"/><circle cx="650.9" cy="324.4" r="2.6"/><circle cx="660.8" cy="322.3" r="2.6"/><circle cx="670.6" cy="338.6" r="2.6"/><circle cx="680.5" cy="329.9" r="2.6"/><circle cx="690.3" cy="326.8" r="2.6"/><circle cx="700.2" cy="327.5" r="2.6"/><circle cx="710.0" cy="303.6" r="2.6"/><circle cx="719.8" cy="341.6" r="2.6"/><circle cx="729.7" cy="323.9" r="2.6"/><circle cx="739.5" cy="337.7" r="2.6"/><circle cx="749.4" cy="311.4" r="2.6"/><circle cx="759.2" cy="329.9" r="2.6"/><circle cx="769.1" cy="328.4" r="2.6"/><circle cx="778.9" cy="338.9" r="2.6"/><circle cx="788.8" cy="326.8" r="2.6"/><circle cx="798.6" cy="343.1" r="2.6"/><circle cx="808.5" cy="317.5" r="2.6"/><circle cx="818.3" cy="329.9" r="2.6"/><circle cx="828.2" cy="331.3" r="2.6"/><circle cx="838.0" cy="325.9" r="2.6"/><circle cx="847.8" cy="324.4" r="2.6"/><circle cx="857.7" cy="337.5" r="2.6"/><circle cx="867.5" cy="325.3" r="2.6"/><circle cx="877.4" cy="330.2" r="2.6"/><circle cx="887.2" cy="325.9" r="2.6"/><circle cx="897.1" cy="319.9" r="2.6"/><circle cx="906.9" cy="323.5" r="2.6"/><circle cx="916.8" cy="322.3" r="2.6"/><circle cx="926.6" cy="316.3" r="2.6"/><circle cx="936.5" cy="331.3" r="2.6"/><circle cx="946.3" cy="331.7" r="2.6"/><circle cx="956.2" cy="326.8" r="2.6"/><circle cx="966.0" cy="325.7" r="2.6"/><circle cx="975.8" cy="343.5" r="2.6"/><circle cx="985.7" cy="335.7" r="2.6"/><circle cx="995.5" cy="337.5" r="2.6"/><circle cx="1005.4" cy="333.8" r="2.6"/><circle cx="1015.2" cy="345.3" r="2.6"/><circle cx="1025.1" cy="331.7" r="2.6"/><circle cx="1034.9" cy="313.6" r="2.6"/><circle cx="1044.8" cy="333.8" r="2.6"/><circle cx="1054.6" cy="320.8" r="2.6"/><circle cx="1064.5" cy="326.8" r="2.6"/><circle cx="1074.3" cy="322.6" r="2.6"/><circle cx="1084.2" cy="337.8" r="2.6"/><circle cx="1094.0" cy="353.6" r="2.6"/><circle cx="1103.8" cy="333.3" r="2.6"/><circle cx="1113.7" cy="337.8" r="2.6"/><circle cx="1123.5" cy="331.4" r="2.6"/><circle cx="1133.4" cy="312.8" r="2.6"/><circle cx="1143.2" cy="345.8" r="2.6"/><circle cx="1153.1" cy="351.7" r="2.6"/><circle cx="1162.9" cy="396.7" r="2.6"/><circle cx="1172.8" cy="471.1" r="2.6"/><circle cx="1182.6" cy="387.8" r="2.6"/><circle cx="1192.5" cy="337.8" r="2.6"/><circle cx="1202.3" cy="328.1" r="2.6"/><circle cx="1212.2" cy="318.3" r="2.6"/><circle cx="1222.0" cy="325.0" r="2.6"/><circle cx="1231.8" cy="324.4" r="2.6"/><circle cx="1241.7" cy="321.7" r="2.6"/><circle cx="1251.5" cy="324.4" r="2.6"/><circle cx="1261.4" cy="357.8" r="2.6"/><circle cx="1271.2" cy="393.3" r="2.6"/><circle cx="1281.1" cy="317.5" r="2.6"/><circle cx="1290.9" cy="393.9" r="2.6"/><circle cx="1300.8" cy="344.4" r="2.6"/><circle cx="1310.6" cy="391.9" r="2.6"/><circle cx="1320.5" cy="369.7" r="2.6"/><circle cx="1330.3" cy="365.6" r="2.6"/><circle cx="1340.2" cy="424.4" r="2.6"/></g>
<g font-family="Liberation Serif" font-size="23" fill="#000"><text x="68.5" y="516.5" text-anchor="end">0</text><text x="68.5" y="486.2" text-anchor="end">10</text><text x="68.5" y="455.8" text-anchor="end">20</text><text x="68.5" y="425.5" text-anchor="end">30</text><text x="68.5" y="395.2" text-anchor="end">40</text><text x="68.5" y="364.8" text-anchor="end">50</text><text x="68.5" y="334.5" text-anchor="end">60</text><text x="68.5" y="304.2" text-anchor="end">70</text><text x="68.5" y="273.8" text-anchor="end">80</text><text x="68.5" y="243.5" text-anchor="end">90</text><text x="68.5" y="213.2" text-anchor="end">100</text><text x="68.5" y="182.8" text-anchor="end">110</text><text x="68.5" y="152.5" text-anchor="end">120</text><text x="70.0" y="529" text-anchor="middle">1</text><text x="148.8" y="529" text-anchor="middle">5</text><text x="227.5" y="529" text-anchor="middle">9</text><text x="306.3" y="529" text-anchor="middle">13</text><text x="385.1" y="529" text-anchor="middle">17</text><text x="463.8" y="529" text-anchor="middle">21</text><text x="542.6" y="529" text-anchor="middle">25</text><text x="621.4" y="529" text-anchor="middle">29</text><text x="700.2" y="529" text-anchor="middle">33</text><text x="778.9" y="529" text-anchor="middle">37</text><text x="857.7" y="529" text-anchor="middle">41</text><text x="936.5" y="529" text-anchor="middle">45</text><text x="1015.2" y="529" text-anchor="middle">49</text><text x="1094.0" y="529" text-anchor="middle">53</text><text x="1172.8" y="529" text-anchor="middle">57</text><text x="1251.5" y="529" text-anchor="middle">61</text><text x="1352" y="529">66</text><text x="1352" y="345.8">56.1</text></g>
</svg>
<div class="soc" style="top:125px;background:linear-gradient(#5c7cbd,#3a5796)"><svg width="32" height="31" style="position:absolute;left:0;top:0"><path d="M17,31 V19 H14 V15 H17 V12 C17,7.5 19.5,6 23,6 H26.5 V10.2 H24.3 C23.5,10.2 23.3,10.8 23.3,11.6 V15 H26.5 L26,19 H23.3 V31 Z" fill="#fff"/></svg></div>
<div class="soc" style="top:157px;background:linear-gradient(#b4ecf2,#70d0e0)"><svg width="32" height="32" style="position:absolute;left:0;top:0"><path d="M8.7,9 C8.7,6 14.6,6 14.6,9 V12 H21 C24.5,12 24.5,18 21,18 H14.6 V21.5 C14.6,22 15,22.2 15.5,22.2 H21 C24.5,22.2 24.5,27.2 21,27.2 H14 C11,27.2 8.7,25 8.7,22 Z" fill="#3598d6"/></svg></div>
<div class="soc" style="top:189px;background:linear-gradient(#2f84e2,#1d62bb)"><svg width="32" height="31" style="position:absolute;left:0;top:0"><path d="M16,3 L19.5,11.5 L28.5,12 L21.5,18 L24,28 L16,22.5 L8,28 L10.5,18 L3.5,12 L12.5,11.5 Z" fill="#f9b51c"/><path d="M11.5,13.5 H20.5 L12,20 H21" stroke="#fff" stroke-width="2.2" fill="none"/></svg></div>
<div class="soc" style="top:221px;background:#fbfbfb"><svg width="32" height="32" style="position:absolute;left:0;top:0"><rect x="0.75" y="0.75" width="30.5" height="30.5" rx="4" fill="none" stroke="#c7282c" stroke-width="1.5"/><path d="M2.5,22 C1.5,16 7,10 12,9 C15,8.5 15,11 14,13 C18,11 21,12 19,15.5 C22,16.5 21.5,22 17,25 C12,28.5 3.5,28 2.5,22Z" fill="#e3221f"/><ellipse cx="8.5" cy="22.5" rx="5" ry="3.8" fill="#111"/><circle cx="7" cy="23.5" r="1.6" fill="#fff"/><path d="M18,4.5 A9.5,9.5 0 0 1 27.5,14" stroke="#f59a1a" stroke-width="2.6" fill="none"/><path d="M18.5,9.5 A4.5,4.5 0 0 1 23,14" stroke="#f59a1a" stroke-width="2.4" fill="none"/></svg></div>
<div class="soc" style="top:253px;background:linear-gradient(#f6f6f6,#dcdcdc)"><svg width="32" height="32" style="position:absolute;left:0;top:0"><rect x="0.5" y="0.5" width="31" height="31" rx="4" fill="none" stroke="#c8c8c8"/><path d="M1.5,5 L16,18 L30.5,5" stroke="#a9a9a9" stroke-width="1.6" fill="none"/><path d="M1.5,28 L12.5,15 M30.5,28 L19.5,15" stroke="#c4c4c4" stroke-width="1.3" fill="none"/></svg></div>
<div class="soc" style="top:285px;background:linear-gradient(#ff7d5d,#e8553a)"><svg width="32" height="32" style="position:absolute;left:0;top:0"><path d="M13,6.5 H19 V13 H25.5 V19 H19 V25.5 H13 V19 H6.5 V13 H13Z" fill="#fff"/></svg></div>
<div class="soc" style="top:318px;background:linear-gradient(#2b9de9,#1272c6)"><div style="position:absolute;left:6px;top:3px;width:20px;height:19px;background:#fff;border-radius:3px;font:bold 18px 'Liberation Sans';color:#1b8fdc;text-align:center;line-height:20px">?</div><div style="position:absolute;left:0;top:22px;width:32px;text-align:center;font:bold 7.5px 'Liberation Sans';color:#fff;line-height:9px">HELP</div></div>
<div class="lbl" style="left:15px;top:555px;color:#f2f2f2;font-size:12px;line-height:14px">Manually mark beat with key<br>(A, S, D, F)</div>
<div style="position:absolute;left:609px;top:554px;font-size:20.5px;color:#fff;line-height:22px">0:02:27.487</div>
<div style="position:absolute;left:609px;top:573px;font-size:20.5px;color:#333;line-height:22px">0:02:27.487</div>
<div style="position:absolute;left:946px;top:563px;width:21px;height:22px;border-radius:50%;background:#777;border:1.5px solid #bbb"><svg width="18" height="19" style="position:absolute;left:0;top:0"><path d="M2,10 C3,2 5,2 6,10 C7,17 8,17 9,10 C10,2 11,2 12,10 C13,17 14,17 15,10" stroke="#fff" stroke-width="1.3" fill="none"/></svg></div>
<div style="position:absolute;left:968px;top:564px;width:129px;height:21px;border-radius:11px;background:radial-gradient(ellipse 50% 60% at 55% 50%,#dcdcdc,#8a8a8a 55%,#222)"></div>
<div style="position:absolute;left:1099px;top:563px;width:22px;height:22px;border-radius:50%;background:#777;border:1.5px solid #bbb"><svg width="19" height="19" style="position:absolute;left:0;top:0"><path d="M2,9.5 L4,4 L5,14 L6,5 L8,13 L9,7 L10,12 L12,8 L13,11 L17,9.5 L13,9 L12,8" stroke="#fff" stroke-width="1.5" fill="#fff"/></svg></div>
<div class="btn" style="left:1339px;top:567px;width:71px;height:20px;">Snapshot</div>
<div class="btn" style="left:26px;top:602px;width:60px;height:21px;"><svg width="22" height="16" viewBox="0 0 22 16"><path d="M3.4,10.1 L10.2,1.3 L18,1.3 L11.2,10.1 Z" fill="#c4c4c4" stroke="#333" stroke-width="1"/><path d="M3.4,10.1 H11.2 V14.5 H3.4 Z" fill="#d8d8d8" stroke="#333" stroke-width="1"/><path d="M11.2,10.1 L18,1.3 L18,4 L11.2,14.5 Z" fill="#777" stroke="#333" stroke-width="1"/></svg></div>
<div class="btn" style="left:98px;top:602px;width:60px;height:21px;"><svg width="22" height="18" viewBox="0 0 22 18"><path d="M6.5,16.5 L11,9.5 C9,8 8.5,5 10,3 L12,2 L18.5,2 L18.5,11 C17,13 15,14 13,13.5 L8.5,17.5 Z" fill="#b9b9b9" stroke="#3a3a3a" stroke-width="1"/><path d="M10,5 C11,4 13,4 14,5 M11.5,9 C13,9 14,10 14.5,11" stroke="#444" stroke-width="0.8" fill="none"/></svg></div>
<div class="lbl" style="left:28px;top:626px">Erase Beat</div>
<div class="lbl" style="left:100px;top:626px">Move Beat</div>
<div class="btn" style="left:171px;top:602px;width:79px;height:21px;">Delete</div>
<div class="btn" style="left:263px;top:602px;width:80px;height:21px;">Snap</div>
<div class="btn" style="left:354px;top:600px;width:84px;height:26px;border:2px solid #3a3ad8;border-top-color:#4a8ef0"><b>Save</b></div>
<div class="btn" style="left:449px;top:602px;width:80px;height:21px;">Load</div>
<div class="inp" style="left:547px;top:603px;width:31px;height:21px">2</div><div class="spin" style="left:578px;top:603px;width:21px;height:21px"><i class="up"></i><i class="dn"></i></div><div class="lbl" style="left:549px;top:626px">Beats Per Bar</div>
<div class="inp" style="left:631px;top:603px;width:31px;height:21px">0</div><div class="spin" style="left:662px;top:603px;width:21px;height:21px"><i class="up"></i><i class="dn"></i></div><div class="lbl" style="left:633px;top:626px">Beat Offset</div>
<div class="inp" style="left:714px;top:603px;width:31px;height:21px">0</div><div class="spin" style="left:745px;top:603px;width:21px;height:21px"><i class="up"></i><i class="dn"></i></div><div class="lbl" style="left:716px;top:626px">Bar Offset</div>
<div class="btn dark" style="left:26px;top:648px;width:106px;height:21px;">Tempo-Dynamic</div>
<div class="inp" style="left:157px;top:647px;width:31px;height:22px">1</div><div class="spin" style="left:188px;top:647px;width:21px;height:22px"><i class="up"></i><i class="dn"></i></div><div class="lbl" style="left:157px;top:671px">Start Bar</div>
<div class="inp" style="left:231px;top:647px;width:31px;height:22px">66</div><div class="spin" style="left:262px;top:647px;width:21px;height:22px"><i class="up"></i><i class="dn"></i></div><div class="lbl" style="left:231px;top:671px">End Bar</div>
<div class="inp" style="left:304px;top:647px;width:31px;height:22px">0</div><div class="spin" style="left:335px;top:647px;width:21px;height:22px"><i class="up"></i><i class="dn"></i></div><div class="lbl" style="left:302px;top:671px">Tempo Low</div>
<div class="inp" style="left:377px;top:647px;width:31px;height:22px">120</div><div class="spin" style="left:408px;top:647px;width:21px;height:22px"><i class="up"></i><i class="dn"></i></div><div class="lbl" style="left:376px;top:671px">Tempo High</div>
<div class="inp" style="left:450px;top:647px;width:31px;height:22px">3</div><div class="spin" style="left:481px;top:647px;width:21px;height:22px"><i class="up"></i><i class="dn"></i></div><div class="lbl" style="left:452px;top:671px">Thickness</div>
<div class="inp" style="left:529px;top:647px;width:31px;height:22px">20</div><div class="spin" style="left:560px;top:647px;width:21px;height:22px"><i class="up"></i><i class="dn"></i></div><div class="lbl" style="left:531px;top:671px">Amp Alpha</div>
<div class="inp" style="left:603px;top:647px;width:31px;height:22px">2</div><div class="spin" style="left:634px;top:647px;width:21px;height:22px"><i class="up"></i><i class="dn"></i></div><div class="lbl" style="left:605px;top:671px">Amp Scale</div>
<div class="inp" style="left:674px;top:647px;width:38px;height:22px">3.25</div><div class="spin" style="left:712px;top:647px;width:21px;height:22px"><i class="up"></i><i class="dn"></i></div><div class="lbl" style="left:675px;top:671px">Window Size</div>
<div class="lbl" style="left:739px;top:647px;color:#ddd;font-size:10px;line-height:11.5px">Default:<br>3.250(1 bar)</div>
<div class="chk" style="left:27px;top:691px"></div><div class="lbl" style="left:47px;top:691px">No Tick</div>
<div class="chk" style="left:92px;top:691px"></div><div class="lbl" style="left:112px;top:691px">Follow Music</div>
<div class="chk" style="left:186px;top:691px"><svg width="14" height="14" style="position:absolute;left:1px;top:-1px"><path d="M2.5,7.5 L5.5,12 L11.5,1.5" stroke="#000" stroke-width="2" fill="none" stroke-linejoin="round"/></svg></div><div class="lbl" style="left:206px;top:691px">Smoothing</div>
<div class="chk" style="left:276px;top:691px"><svg width="14" height="14" style="position:absolute;left:1px;top:-1px"><path d="M2.5,7.5 L5.5,12 L11.5,1.5" stroke="#000" stroke-width="2" fill="none" stroke-linejoin="round"/></svg></div><div class="lbl" style="left:296px;top:691px">Beat</div>
<div class="chk" style="left:328px;top:691px"><svg width="14" height="14" style="position:absolute;left:1px;top:-1px"><path d="M2.5,7.5 L5.5,12 L11.5,1.5" stroke="#000" stroke-width="2" fill="none" stroke-linejoin="round"/></svg></div><div class="lbl" style="left:348px;top:691px">Average Tempo</div>
<div class="chk" style="left:434px;top:691px"><svg width="14" height="14" style="position:absolute;left:1px;top:-1px"><path d="M2.5,7.5 L5.5,12 L11.5,1.5" stroke="#000" stroke-width="2" fill="none" stroke-linejoin="round"/></svg></div><div class="lbl" style="left:454px;top:691px">Amplitude</div>
<div class="rad" style="left:516px;top:691px"><div style="position:absolute;left:5px;top:5px;width:4px;height:4px;background:#222;border-radius:1px"></div></div>
<div class="lbl" style="left:537px;top:691px">Curve</div>
<div class="rad" style="left:586px;top:691px"></div>
<div class="lbl" style="left:607px;top:691px">Worm</div>
<div class="btn" style="left:1308px;top:601px;width:103px;height:26px;background:linear-gradient(#d4eefc,#a6d8f6);border:2px solid #3b3bc8;border-top-color:#4f9ae8"><b style="font-size:11px">Share Snapshot</b></div>
<div class="btn" style="left:1336px;top:641px;width:75px;height:26px;background:linear-gradient(#7a7a7a,#6e6e6e);border:2px solid #3b3bc8;border-top-color:#4f9ae8"><span style="color:#8e8e8e;font-size:12px;-webkit-text-stroke:0">IOI+</span></div>
</body></html>
